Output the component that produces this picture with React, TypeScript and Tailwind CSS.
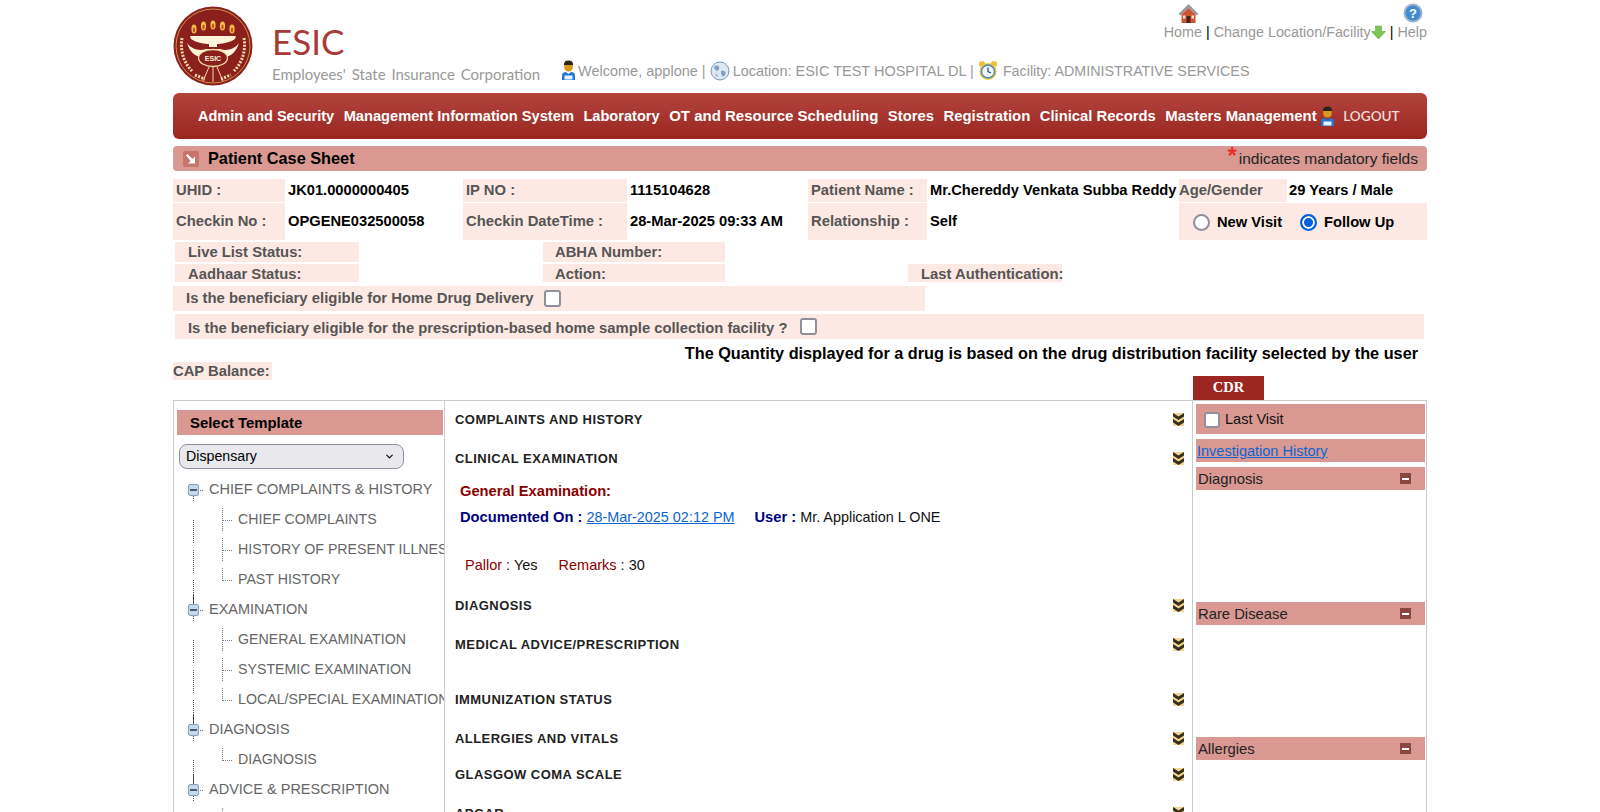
import type { ReactNode } from "react";
import { ChevronDown } from "lucide-react";

const navItems = [
  { name: "Admin and Security", size: "text-[14.5px]" },
  { name: "Management Information System", size: "text-[14.65px]" },
  { name: "Laboratory", size: "text-[14.6px]" },
  { name: "OT and Resource Scheduling", size: "text-[15px]" },
  { name: "Stores", size: "text-[14.8px]" },
  { name: "Registration", size: "text-[14.9px]" },
  { name: "Clinical Records", size: "text-[14.8px]" },
  { name: "Masters Management", size: "text-[14.9px]" },
];

const tree = [
  { title: "CHIEF COMPLAINTS & HISTORY", kids: ["CHIEF COMPLAINTS", "HISTORY OF PRESENT ILLNESS", "PAST HISTORY"] },
  { title: "EXAMINATION", kids: ["GENERAL EXAMINATION", "SYSTEMIC EXAMINATION", "LOCAL/SPECIAL EXAMINATION"] },
  { title: "DIAGNOSIS", kids: ["DIAGNOSIS"] },
  { title: "ADVICE & PRESCRIPTION", kids: [""] },
];

function Logo() {
  return (
    <svg width="80" height="80" viewBox="0 0 80 80" className="shrink-0">
      <circle cx="40" cy="40" r="39.5" fill="#8a1f1c" />
      <circle cx="40" cy="40" r="37" fill="none" stroke="#c9924a" strokeWidth="1" />
      {[21, 30.5, 40, 49.5, 59].map((x, i) => (
        <g key={x}>
          <ellipse cx={x} cy={i === 2 ? 19 : i === 0 || i === 4 ? 23 : 20} rx="2.6" ry="4.5" fill="#f1c14a" />
          <ellipse cx={x} cy={i === 2 ? 20 : i === 0 || i === 4 ? 24 : 21} rx="1.2" ry="2.4" fill="#c6541f" />
        </g>
      ))}
      <path d="M17 30H63L62 33C57 37 47 38 44 38V41H36V38C33 38 23 37 18 33Z" fill="#fff3d9" />
      <path d="M14 37C19 44 27 45 33 43H47C53 45 61 44 66 37C63 47 57 50 53 51C47 44 33 44 27 51C23 50 17 47 14 37Z" fill="#fff3d9" />
      <ellipse cx="40" cy="52" rx="14.5" ry="8.5" fill="#8a1f1c" stroke="#f3d9a8" strokeWidth="1.3" />
      <text x="40" y="55" textAnchor="middle" fontSize="7" fontWeight="700" fill="#fff3d9" fontFamily="Liberation Sans">
        ESIC
      </text>
      <path d="M36 61L30 75M44 61L50 75M40 61V76" stroke="#f3d9a8" strokeWidth="1" fill="none" />
      <path d="M9 32C7 43 10 56 19 65M71 32C73 43 70 56 61 65" stroke="#f3d9a8" strokeWidth="3" strokeDasharray="2 1.4" fill="none" />
      <path d="M22 69L32 73M48 73L58 69" stroke="#f3d9a8" strokeWidth="3" strokeDasharray="2 1.4" fill="none" />
    </svg>
  );
}

function UserIcon({ className = "" }: { className?: string }) {
  return (
    <svg width="15" height="21" viewBox="0 0 15 21" className={className}>
      <path d="M3 4C3 1.5 5 .5 7.5 .5S12 1.5 12 4V5H3Z" fill="#2b2416" />
      <path d="M3.2 5H11.8V7C11.8 10 10 11.5 7.5 11.5S3.2 10 3.2 7Z" fill="#d79a1e" />
      <path d="M1 20V15C1 13 3 12 5 12L7.5 14L10 12C12 12 14 13 14 15V20Z" fill="#1f78d1" />
      <rect x="3.5" y="15.5" width="8" height="4" fill="#e8f3fc" />
    </svg>
  );
}

function GlobeIcon() {
  return (
    <svg width="20" height="20" viewBox="0 0 20 20" className="shrink-0">
      <circle cx="10" cy="10" r="9" fill="#dbe7f1" stroke="#7b9ab5" />
      <path d="M4 6C7 3 10 5 9 8S5 10 4 6ZM11 10C14 9 17 11 15 14S11 15 11 10Z" fill="#7f9fc0" />
      <path d="M5 13C6 12 8 13 8 15S6 17 5 13Z" fill="#a9bfd4" />
    </svg>
  );
}

function ClockIcon() {
  return (
    <svg width="20" height="21" viewBox="0 0 20 21" className="shrink-0">
      <circle cx="4" cy="4" r="3" fill="#eec13c" />
      <circle cx="16" cy="4" r="3" fill="#eec13c" />
      <circle cx="10" cy="11.5" r="8.5" fill="#f0c64b" />
      <circle cx="10" cy="11.5" r="6.5" fill="#eef4fa" stroke="#4d84b8" strokeWidth="1.4" />
      <path d="M10 7.5V11.5L13 13" stroke="#2a5a8c" strokeWidth="1.3" fill="none" />
    </svg>
  );
}

function HomeIcon() {
  return (
    <svg width="21" height="20" viewBox="0 0 21 20">
      <path d="M10.5 1L20.5 11L18.5 12.5L10.5 5L2.5 12.5L.5 11Z" fill="#9a9a9a" />
      <path d="M3.5 11.5L10.5 5L17.5 11.5V20H3.5Z" fill="#cf5433" />
      <rect x="8.5" y="13" width="4" height="7" fill="#4a2418" />
      <rect x="5" y="12.5" width="2.5" height="3" fill="#f3e7d6" />
      <rect x="13.5" y="12.5" width="2.5" height="3" fill="#f3e7d6" />
    </svg>
  );
}

function HelpIcon() {
  return (
    <svg width="20" height="20" viewBox="0 0 20 20">
      <circle cx="10" cy="10" r="9.5" fill="#9cb3c9" />
      <circle cx="10" cy="10" r="7.5" fill="#3f8ad0" />
      <text x="10" y="14.5" textAnchor="middle" fontSize="13" fontWeight="700" fill="#fff" fontFamily="Liberation Sans">
        ?
      </text>
    </svg>
  );
}

function GreenArrow() {
  return (
    <svg width="15" height="15" viewBox="0 0 15 15" className="inline-block align-[-3px]">
      <path d="M4.5 1H10.5V6.5H14.5L7.5 14L.5 6.5H4.5Z" fill="#7cc552" stroke="#64ad3f" strokeWidth=".6" />
    </svg>
  );
}

function Chevrons() {
  return (
    <svg width="11" height="13" viewBox="0 0 11 13" className="mb-[2px] shrink-0">
      <rect width="11" height="13" fill="#f4d48e" />
      <path d="M0 0L5.5 3.5L11 0V3.5L5.5 7L0 3.5ZM0 6L5.5 9.5L11 6V9.5L5.5 13L0 9.5Z" fill="#33301f" />
    </svg>
  );
}

function MinusBox() {
  return (
    <span className="flex h-[11px] w-[11px] items-center justify-center bg-[#8c4642]">
      <span className="h-[2px] w-[7px] bg-white" />
    </span>
  );
}

function Check({ className = "" }: { className?: string }) {
  return (
    <input
      type="checkbox"
      className={`m-0 shrink-0 appearance-none rounded-[3px] border-2 border-[#8f8f9d] bg-white ${className}`}
    />
  );
}

function Radio({ checked = false, className = "" }: { checked?: boolean; className?: string }) {
  return (
    <input
      type="radio"
      name="visit"
      defaultChecked={checked}
      className={`m-0 h-[17px] w-[17px] shrink-0 appearance-none rounded-full border-2 border-[#8f8f9d] bg-white checked:border-[#0060df] checked:bg-[#0060df] checked:shadow-[inset_0_0_0_2px_white] ${className}`}
    />
  );
}

function TreeParent({ text, first }: { text: string; first: boolean }) {
  return (
    <div className="flex h-[30px] items-center">
      <svg width="32" height="30" viewBox="0 0 32 30" className="shrink-0">
        {!first && <path d="M16.5 0V9" stroke="#444" strokeDasharray="1 1" />}
        <path d="M16.5 21V26" stroke="#444" strokeDasharray="1 1" />
        <rect x="11.5" y="9.5" width="10" height="11" rx="1.5" fill="#c5d8ea" stroke="#7fa3c4" />
        <rect x="13" y="14" width="7" height="2" fill="#4a5a68" />
        <path d="M23 15.5H27" stroke="#777" strokeDasharray="1 1" />
      </svg>
      <span className="whitespace-nowrap text-[14.5px] text-[#666]">{text}</span>
    </div>
  );
}

function TreeChild({ text, last }: { text: string; last: boolean }) {
  return (
    <div className="flex h-[30px] items-center">
      <svg width="61" height="30" viewBox="0 0 61 30" className="shrink-0 overflow-visible">
        <path d="M16.5 15V39" stroke="#444" strokeDasharray="1 1" />
        <path d={last ? "M45.5 3V16" : "M45.5 3V27"} stroke="#777" strokeDasharray="1 1" />
        <path d="M46 15.5H56" stroke="#777" strokeDasharray="1 1" />
      </svg>
      <span className="whitespace-nowrap text-[14.2px] text-[#666]">{text}</span>
    </div>
  );
}

function Label({ children, className = "" }: { children: ReactNode; className?: string }) {
  return (
    <div className={`bg-[#fde9e3] text-[14.8px] font-bold text-[#555] ${className}`}>{children}</div>
  );
}

function Value({ children, className = "" }: { children: ReactNode; className?: string }) {
  return <div className={`whitespace-nowrap text-[14.7px] font-bold text-black ${className}`}>{children}</div>;
}

function Heading({ title, className = "" }: { title: string; className?: string }) {
  return (
    <div className={`flex items-center justify-between pr-[8px] ${className}`}>
      <span className="text-[13px] font-bold tracking-[0.45px] text-[#222]">{title}</span>
      <Chevrons />
    </div>
  );
}

function SideBar({ title, className = "" }: { title: string; className?: string }) {
  return (
    <div className={`flex h-[23px] items-center justify-between bg-[#d99892] pl-[2px] pr-[14px] text-[14.8px] text-[#222] ${className}`}>
      <span className="mt-[1px]">{title}</span>
      <MinusBox />
    </div>
  );
}

export default function App() {
  return (
    <div className="h-[812px] w-[1600px] overflow-hidden bg-white font-['Liberation_Sans',Arial,sans-serif]">
      <div className="ml-[173px] w-[1254px]">
        {/* Header */}
        <div className="flex h-[93px] pt-[6px]">
          <Logo />
          <div className="ml-[19px] w-[283px] shrink-0 font-['Lato',sans-serif]">
            <div className="mt-[15px] text-[35px] leading-[40px] text-[#a83b38]">ESIC</div>
            <div className="mt-[3px] whitespace-nowrap text-[15px] leading-[20px] text-[#999] [word-spacing:2px]">
              Employees' State Insurance Corporation
            </div>
          </div>
          <div className="relative flex-1">
            <div className="absolute right-0 top-[-4px] flex flex-col items-end text-[14.35px] leading-[17px] text-[#999]">
              <div className="flex h-[22px] w-full items-center justify-between pl-[14px] pr-[4px]">
                <HomeIcon />
                <HelpIcon />
              </div>
              <div className="whitespace-nowrap">
                Home <span className="text-black">|</span> Change Location/Facility
                <GreenArrow /> <span className="text-black">|</span> Help
              </div>
            </div>
            <div className="ml-[6px] mt-[54px] flex items-center whitespace-nowrap text-[14.5px] leading-[20px] text-[#999]">
              <UserIcon className="shrink-0" />
              <span className="ml-[2px]">Welcome, applone |</span>
              <span className="ml-[4px]"><GlobeIcon /></span>
              <span className="ml-[3px]">Location: ESIC TEST HOSPITAL DL |</span>
              <span className="ml-[4px]"><ClockIcon /></span>
              <span className="ml-[5px] text-[14.3px]">Facility: ADMINISTRATIVE SERVICES</span>
            </div>
          </div>
        </div>

        {/* Nav */}
        <nav className="flex h-[46px] items-center rounded-[6px] bg-gradient-to-b from-[#b2443c] to-[#9a2521] pl-[25px] pt-[1px] font-bold text-white">
          {navItems.map((n) => (
            <span key={n.name} className={`mr-[9.5px] whitespace-nowrap ${n.size}`}>
              {n.name}
            </span>
          ))}
          <UserIcon className="-ml-[6px] shrink-0" />
          <span className="ml-[8px] font-['Lato',sans-serif] text-[13.6px] font-semibold text-[#f0dcd8]">LOGOUT</span>
        </nav>

        {/* Title bar */}
        <div className="mt-[7px] flex h-[25px] items-center justify-between rounded-[4px] bg-[#d99892] pl-[10px] pr-[9px]">
          <div className="flex items-center">
            <span className="flex h-[16px] w-[16px] items-center justify-center rounded-[2px] bg-[#c8736c]">
              <svg width="10" height="10" viewBox="0 0 10 10">
                <path d="M0 1.5L1.5 0L6.5 5L9 2.5V9.5H2L4.5 7Z" fill="#fff" />
              </svg>
            </span>
            <span className="ml-[9px] text-[16.3px] font-bold text-black">Patient Case Sheet</span>
          </div>
          <div className="flex items-center text-[15.5px] text-[#222]">
            <span className="mr-[2px] mt-[-5px] text-[24px] font-bold leading-[20px] text-[#e8302a]">*</span>
            indicates mandatory fields
          </div>
        </div>

        {/* Patient grid */}
        <div className="mt-[8px] grid grid-cols-[112px_178px_164px_181px_119px_252px_108px_140px] grid-rows-[23px_37px] gap-y-[1px]">
          <Label className="flex items-center pl-[3px]">UHID :</Label>
          <Value className="flex items-center pl-[3px]">JK01.0000000405</Value>
          <Label className="flex items-center pl-[3px]">IP NO :</Label>
          <Value className="flex items-center pl-[3px]">1115104628</Value>
          <Label className="flex items-center pl-[3px]">Patient Name :</Label>
          <Value className="flex items-center pl-[3px]">Mr.Chereddy Venkata Subba Reddy</Value>
          <Label className="flex items-center pl-0">Age/Gender</Label>
          <Value className="flex items-center pl-[2px]">29 Years / Male</Value>

          <Label className="pl-[3px] pt-[7px]">Checkin No :</Label>
          <Value className="pl-[3px] pt-[7px]">OPGENE032500058</Value>
          <Label className="pl-[3px] pt-[7px]">Checkin DateTime :</Label>
          <Value className="pl-[3px] pt-[7px]">28-Mar-2025 09:33 AM</Value>
          <Label className="pl-[3px] pt-[7px]">Relationship :</Label>
          <Value className="pl-[3px] pt-[7px]">Self</Value>
          <div className="col-span-2 flex items-center bg-[#fde9e3] pl-[14px] pt-[2px] text-[14.7px] font-bold text-black">
            <Radio />
            <span className="ml-[7px]">New Visit</span>
            <Radio checked className="ml-[18px]" />
            <span className="ml-[7px]">Follow Up</span>
          </div>
        </div>

        {/* Status rows */}
        <div className="mt-[2px] grid grid-cols-[2px_184px_184px_182px_183px_154px] grid-rows-[20px_18px] gap-y-[2px]">
          <div />
          <Label className="pl-[13px] leading-[20px]">Live List Status:</Label>
          <div />
          <Label className="pl-[12px] text-[14.6px] leading-[20px]">ABHA Number:</Label>
          <div />
          <div />
          <div />
          <Label className="pl-[13px] leading-[20px]">Aadhaar Status:</Label>
          <div />
          <Label className="pl-[12px] leading-[20px]">Action:</Label>
          <div />
          <Label className="whitespace-nowrap pl-[13px] leading-[20px]">Last Authentication:</Label>
        </div>

        <Label className="mt-[4px] flex h-[25px] w-[752px] items-center pl-[13px] text-[14.9px]">
          Is the beneficiary eligible for Home Drug Delivery
          <Check className="ml-[10px] h-[17px] w-[17px]" />
        </Label>
        <Label className="ml-[2px] mt-[3px] flex h-[25px] w-[1249px] items-center pl-[13px] pt-[3px]">
          Is the beneficiary eligible for the prescription-based home sample collection facility ?
          <Check className="mb-[3px] ml-[13px] h-[17px] w-[17px]" />
        </Label>

        <div className="mt-[5px] pr-[9px] text-right text-[16.25px] font-bold leading-[18px] text-black">
          The Quantity displayed for a drug is based on the drug distribution facility selected by the user
        </div>

        <div className="relative mt-[1px] h-[20px]">
          <Label className="absolute left-0 top-[-1px] h-[18px] w-[99px] text-[14.6px] leading-[18px]">CAP Balance:</Label>
          <div className="absolute left-[1020px] top-[13px] flex h-[24px] w-[71px] items-center justify-center bg-[#9c2622] font-['Liberation_Serif',serif] text-[14.5px] font-bold text-white">
            CDR
          </div>
        </div>

        {/* Main panel */}
        <div className="mt-[17px] flex h-[420px] overflow-hidden border border-[#ccc]">
          <div className="w-[271px] shrink-0 overflow-hidden border-r border-[#ccc] pl-[3px] pt-[9px]">
            <div className="flex h-[25px] w-[266px] items-center bg-[#d99892] pl-[13px] pt-[1px] text-[14.9px] font-bold text-black">
              Select Template
            </div>
            <div className="relative ml-[2px] mt-[9px] h-[25px] w-[225px]">
              <select
                defaultValue="Dispensary"
                className="h-full w-full appearance-none rounded-[8px] border border-[#8f8f9d] bg-[#e9e9ed] pl-[6px] pt-[1px] text-[14.2px] text-black"
              >
                <option>Dispensary</option>
              </select>
              <ChevronDown className="pointer-events-none absolute right-[9px] top-[7px] h-[11px] w-[11px] text-black" strokeWidth={2.5} />
            </div>
            <div className="mt-[6px]">
              {tree.map((t, i) => (
                <div key={t.title}>
                  <TreeParent text={t.title} first={i === 0} />
                  {t.kids.map((k, j) => (
                    <TreeChild key={k || j} text={k} last={j === t.kids.length - 1} />
                  ))}
                </div>
              ))}
            </div>
          </div>

          <div className="flex-1 pl-[10px]">
            <Heading title="COMPLAINTS AND HISTORY" className="mt-[10px] h-[18px]" />
            <Heading title="CLINICAL EXAMINATION" className="mt-[21px] h-[18px]" />
            <div className="mt-[14px] pl-[5px] text-[14.7px] font-bold leading-[18px] text-[#8b0000]">General Examination:</div>
            <div className="mt-[8px] whitespace-nowrap pl-[5px] text-[14.4px] leading-[18px]">
              <span className="text-[14.7px] font-bold text-[#000080]">Documented On : </span>
              <a className="text-[#0b66d0] underline">28-Mar-2025 02:12 PM</a>
              <span className="ml-[20px] text-[14.7px] font-bold text-[#000080]">User : </span>
              <span className="text-[#111]">Mr. Application L ONE</span>
            </div>
            <div className="mt-[30px] whitespace-nowrap pl-[10px] text-[14.5px] leading-[18px] text-[#111]">
              <span className="text-[#8b0000]">Pallor</span> : Yes
              <span className="ml-[21px] text-[#8b0000]">Remarks</span> : 30
            </div>
            <Heading title="DIAGNOSIS" className="mt-[23px] h-[18px]" />
            <Heading title="MEDICAL ADVICE/PRESCRIPTION" className="mt-[21px] h-[18px]" />
            <Heading title="IMMUNIZATION STATUS" className="mt-[37px] h-[18px]" />
            <Heading title="ALLERGIES AND VITALS" className="mt-[21px] h-[18px]" />
            <Heading title="GLASGOW COMA SCALE" className="mt-[18px] h-[18px]" />
            <Heading title="APGAR" className="mt-[21px] h-[18px]" />
          </div>

          <div className="w-[234px] shrink-0 border-l border-[#ccc] pl-[3px] pr-[1px] pt-[3px]">
            <div className="flex h-[30px] items-center bg-[#d99892] pl-[8px] pt-[1px] text-[14.5px] text-[#111]">
              <Check className="h-[16px] w-[16px]" />
              <span className="ml-[5px]">Last Visit</span>
            </div>
            <div className="mt-[5px] flex h-[23px] items-center bg-[#d99892] pl-[1px] pt-[2px] text-[14.5px] text-[#0b66d0] underline">
              Investigation History
            </div>
            <SideBar title="Diagnosis" className="mt-[5px]" />
            <SideBar title="Rare Disease" className="mt-[112px]" />
            <SideBar title="Allergies" className="mt-[112px]" />
          </div>
        </div>
      </div>
    </div>
  );
}
